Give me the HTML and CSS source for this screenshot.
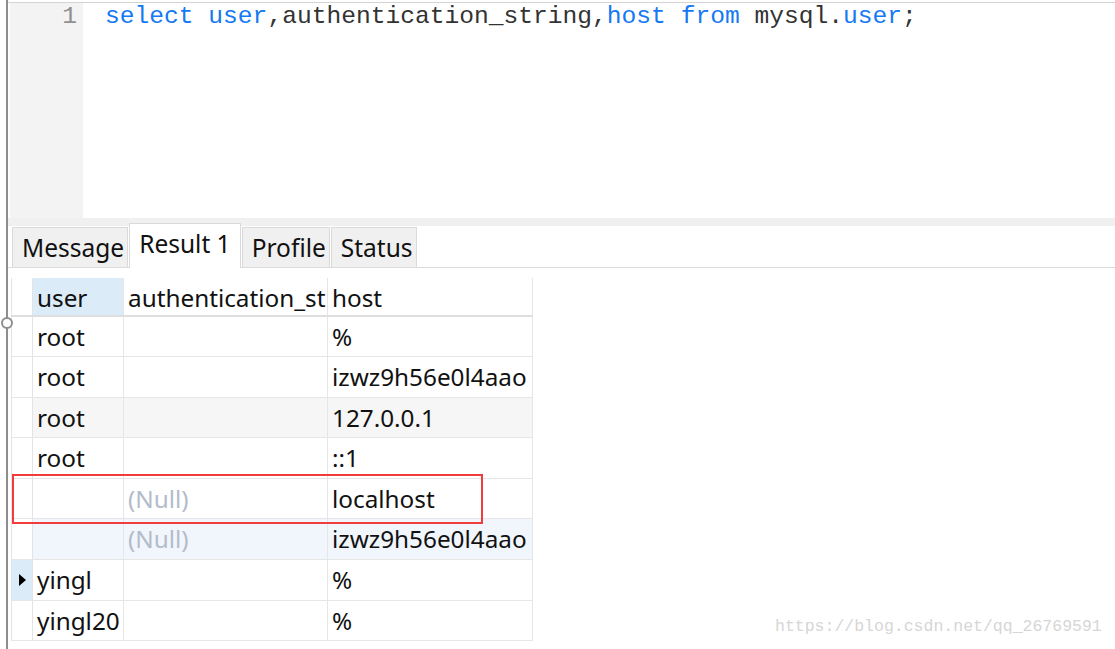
FILE: index.html
```html
<!DOCTYPE html>
<html>
<head>
<meta charset="utf-8">
<link rel="stylesheet" href="styles.css">
</head>
<body>
<div class="frame">
  <div class="editor">
    <div class="gutter"><span class="ln">1</span></div>
    <div class="code"><span class="kw">select</span> <span class="kw">user</span>,authentication_string,<span class="kw">host</span> <span class="kw">from</span> mysql.<span class="kw">user</span>;</div>
  </div>
  <div class="band"></div>
  <div class="tabs">
    <div class="tab">Message</div>
    <div class="tab active">Result 1</div>
    <div class="tab">Profile</div>
    <div class="tab">Status</div>
  </div>
  <div class="grid">
    <div class="row head">
      <div class="rh"></div>
      <div class="c c1 sel">user</div>
      <div class="c c2">authentication_st</div>
      <div class="c c3">host</div>
    </div>
    <div class="row">
      <div class="rh"></div>
      <div class="c c1">root</div>
      <div class="c c2"></div>
      <div class="c c3">%</div>
    </div>
    <div class="row">
      <div class="rh"></div>
      <div class="c c1">root</div>
      <div class="c c2"></div>
      <div class="c c3">izwz9h56e0l4aao</div>
    </div>
    <div class="row grey">
      <div class="rh"></div>
      <div class="c c1">root</div>
      <div class="c c2"></div>
      <div class="c c3">127.0.0.1</div>
    </div>
    <div class="row">
      <div class="rh"></div>
      <div class="c c1">root</div>
      <div class="c c2"></div>
      <div class="c c3">::1</div>
    </div>
    <div class="row">
      <div class="rh"></div>
      <div class="c c1"></div>
      <div class="c c2 null">(Null)</div>
      <div class="c c3">localhost</div>
    </div>
    <div class="row blue">
      <div class="rh"></div>
      <div class="c c1"></div>
      <div class="c c2 null">(Null)</div>
      <div class="c c3">izwz9h56e0l4aao</div>
    </div>
    <div class="row">
      <div class="rh cur"><span class="tri"></span></div>
      <div class="c c1">yingl</div>
      <div class="c c2"></div>
      <div class="c c3">%</div>
    </div>
    <div class="row">
      <div class="rh"></div>
      <div class="c c1">yingl20</div>
      <div class="c c2"></div>
      <div class="c c3">%</div>
    </div>
  </div>
  <div class="redbox"></div>
  <div class="knob"></div>
  <div class="watermark">https://blog.csdn.net/qq_26769591</div>
</div>
</body>
</html>
```
FILE: styles.css
```css
html, body {
  margin: 0;
  padding: 0;
  background: #ffffff;
  overflow: hidden;
}
.frame {
  position: relative;
  margin-left: 6px;
  border-left: 2px solid #8e8e8e;
  height: 649px;
  box-sizing: border-box;
  padding-top: 2px;
}
.editor {
  display: flex;
  height: 216px;
  border-top: 1px solid #d4d4d4;
  padding-left: 2px;
  box-sizing: border-box;
}
.gutter {
  width: 73px;
  background: #f3f3f3;
  box-sizing: border-box;
  padding-right: 6px;
  text-align: right;
  font-family: "Liberation Mono", monospace;
  font-size: 24.6px;
  line-height: 28px;
  color: #8f8f8f;
}
.code {
  padding-left: 22px;
  font-family: "Liberation Mono", monospace;
  font-size: 24.6px;
  line-height: 28px;
  color: #333333;
  white-space: pre;
}
.kw {
  color: #1479f2;
}
.band {
  height: 8px;
  background: #f0f0f0;
}
.tabs {
  display: flex;
  align-items: flex-end;
  height: 41px;
  padding-left: 4px;
  border-bottom: 1px solid #dcdcdc;
  font-family: "Noto Sans", sans-serif;
  font-size: 24.5px;
  color: #111111;
}
.tab {
  height: 40px;
  box-sizing: border-box;
  background: #f0f0f0;
  border: 1px solid #dadada;
  border-bottom: none;
  padding: 0 3px 0 9px;
  line-height: 40px;
  margin-right: 1px;
}
.tab.active {
  background: #ffffff;
  margin-bottom: -1px;
  height: 45px;
  line-height: 40px;
  padding: 0 9px;
}
.grid {
  width: max-content;
  margin-top: 10px;
  margin-left: 3px;
  font-family: "Noto Sans", sans-serif;
  font-size: 24.3px;
  color: #111111;
}
.row {
  display: flex;
  height: 40.6px;
  box-sizing: border-box;
  border-bottom: 1px solid #e6e6e6;
}
.row.head {
  height: 38.5px;
  border-bottom: 2px solid #dedede;
}
.rh {
  width: 22px;
  box-sizing: border-box;
  border-left: 1px solid #e4e4e4;
  border-right: 1px solid #e4e4e4;
  display: flex;
  align-items: center;
  justify-content: center;
}
.rh.cur {
  background: #dcebf8;
}
.tri {
  width: 0;
  height: 0;
  border-top: 6px solid transparent;
  border-bottom: 6px solid transparent;
  border-left: 7px solid #000000;
}
.c {
  box-sizing: border-box;
  padding-left: 4px;
  white-space: nowrap;
  overflow: hidden;
  line-height: 39px;
  border-right: 1px solid #e6e6e6;
}
.c1 { width: 91px; }
.c2 { width: 204px; }
.c3 { width: 205px; }
.sel { background: #dcebf8; }
.row.grey .c { background: #f6f6f6; }
.row.blue .c { background: #f1f6fc; }
.null { color: #b3bccb; }
.redbox {
  position: absolute;
  left: 4px;
  top: 474px;
  width: 471px;
  height: 50px;
  box-sizing: border-box;
  border: 2px solid #f03c3c;
}
.knob {
  position: absolute;
  left: -7px;
  top: 317px;
  width: 12px;
  height: 12px;
  box-sizing: border-box;
  border: 2px solid #8e8e8e;
  border-radius: 50%;
  background: #ffffff;
}
.watermark {
  position: absolute;
  left: 767px;
  top: 617px;
  font-family: "Liberation Mono", monospace;
  font-size: 16.5px;
  color: #d6d6d6;
}
```
